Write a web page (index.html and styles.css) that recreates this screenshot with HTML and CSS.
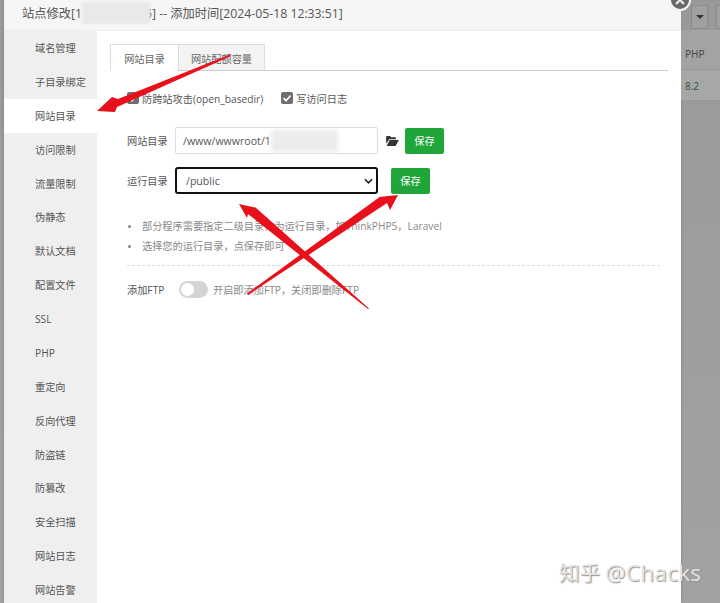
FILE: index.html
```html
<!DOCTYPE html>
<html lang="zh-CN">
<head>
<meta charset="utf-8">
<title>站点修改</title>
<link rel="stylesheet" href="styles.css">
</head>
<body>
<div class="page">
  <div class="modal">
    <header class="head">
      <span class="head-text">站点修改[1<span class="mask-head"></span>5] -- 添加时间[2024-05-18 12:33:51]</span>
    </header>
    <div class="content">
      <nav class="side">
        <a class="item">域名管理</a>
        <a class="item">子目录绑定</a>
        <a class="item active">网站目录</a>
        <a class="item">访问限制</a>
        <a class="item">流量限制</a>
        <a class="item">伪静态</a>
        <a class="item">默认文档</a>
        <a class="item">配置文件</a>
        <a class="item">SSL</a>
        <a class="item">PHP</a>
        <a class="item">重定向</a>
        <a class="item">反向代理</a>
        <a class="item">防盗链</a>
        <a class="item">防篡改</a>
        <a class="item">安全扫描</a>
        <a class="item">网站日志</a>
        <a class="item">网站告警</a>
      </nav>
      <main class="main">
        <div class="tabs">
          <div class="tab current">网站目录</div>
          <div class="tab">网站配额容量</div>
        </div>
        <div class="form">
          <div class="checks">
            <label class="check"><span class="box"><svg viewBox="0 0 12 12" width="12" height="12"><path d="M2.5 6.2 5 8.7 9.6 3.5" fill="none" stroke="#fff" stroke-width="1.7"/></svg></span>防跨站攻击(open_basedir)</label>
            <label class="check"><span class="box"><svg viewBox="0 0 12 12" width="12" height="12"><path d="M2.5 6.2 5 8.7 9.6 3.5" fill="none" stroke="#fff" stroke-width="1.7"/></svg></span>写访问日志</label>
          </div>
          <div class="row row-dir">
            <span class="label">网站目录</span>
            <div class="input">/www/wwwroot/1<span class="mask-input"></span></div>
            <svg class="folder" viewBox="0 0 14 11" width="13" height="10"><path d="M0 1.2C0 .5.5 0 1.2 0h3l1.2 1.3h4.4c.6 0 1 .4 1 1v1.2H3.4L0 8.4z" fill="#333"/><path d="M3.8 4.3H14L10.6 10.6c-.2.3-.4.4-.8.4H.6z" fill="#333"/></svg>
            <button class="save">保存</button>
          </div>
          <div class="row row-run">
            <span class="label">运行目录</span>
            <div class="select">/public<svg class="chev" viewBox="0 0 10 6" width="9" height="6"><path d="M1 1l4 4 4-4" fill="none" stroke="#222" stroke-width="1.8"/></svg></div>
            <button class="save save-run">保存</button>
          </div>
          <ul class="notes">
            <li>部分程序需要指定二级目录作为运行目录，如ThinkPHP5，Laravel</li>
            <li>选择您的运行目录，点保存即可</li>
          </ul>
          <div class="ftp">
            <span class="ftp-label">添加FTP</span>
            <span class="toggle"><span class="knob"></span></span>
            <span class="ftp-text">开启即添加FTP，关闭即删除FTP</span>
          </div>
        </div>
      </main>
    </div>
  </div>
  <aside class="behind">
    <div class="toolbar"><span class="drop"><span class="caret"></span></span><span class="drop drop-next"></span></div>
    <div class="cell cell-head">PHP</div>
    <div class="cell cell-val">8.2</div>
  </aside>
  <span class="close"><svg viewBox="0 0 18 18" width="18" height="18"><path d="M5 5l8 8M13 5l-8 8" stroke="#e6e6e6" stroke-width="2.4"/></svg></span>
  <svg class="arrows" viewBox="0 0 720 603" width="720" height="603">
    <path d="M230 54.500 118 99 112 97 97 111 115 112 117 107 231 56Z" fill="#e8101a"/>
    <path d="M247 293.500 381 196 379 197 398 195 390 210 387 203 248 295Z" fill="#e8101a"/>
    <path d="M369 308.500 255 207 257 208 239 204 247 218 248 214 368 309Z" fill="#e8101a"/>
  </svg>
  <div class="mark">知乎 <span class="mark-name">@Chacks</span></div>
</div>
</body>
</html>
```
FILE: styles.css
```css
* { box-sizing: border-box; }
html, body { margin: 0; padding: 0; }
body {
  font-family: "Open Sans", "Noto Sans CJK SC", sans-serif;
  color: #555;
}
.page {
  position: relative;
  display: flex;
  width: 720px;
  height: 603px;
  padding-left: 4px;
  overflow: hidden;
  background: linear-gradient(#9a9a9a, #a2a2a2);
}
.modal {
  display: flex;
  flex-direction: column;
  width: 677px;
  flex: none;
  background: #fff;
  box-shadow: 0 0 3px rgba(0, 0, 0, .2);
}
.head {
  height: 31px;
  flex: none;
  padding: 2px 0 0 18px;
  background: #f6f6f6;
  border-bottom: 1px solid #eee;
  font-size: 12.25px;
  line-height: 20px;
  white-space: nowrap;
  color: #555;
}
.mask-head {
  display: inline-block;
  width: 68px;
  height: 22px;
  margin-right: -5px;
  vertical-align: -6px;
  background: #e9e9e9;
  filter: blur(1px);
}
.content { display: flex; flex: 1; min-height: 0; }
.side {
  display: flex;
  flex-direction: column;
  width: 93px;
  flex: none;
  background: #efefef;
}
.item {
  display: block;
  flex: none;
  height: 33.88px;
  padding-left: 31px;
  font-size: 10.2px;
  line-height: 34px;
  color: #555;
}
.item.active { background: #fff; }
.main { flex: 1; padding: 13px 13px 0 13px; }
.tabs {
  display: flex;
  height: 27px;
  border-bottom: 1px solid #ccc;
}
.tab {
  width: 87px;
  height: 26px;
  border: 1px solid #ddd;
  border-bottom: 0;
  background: #f3f3f3;
  font-size: 10.2px;
  line-height: 28px;
  text-align: center;
  color: #666;
}
.tab.current {
  width: 68px;
  height: 27px;
  background: #fff;
  border-right: 0;
}
.form { padding: 0 0 0 17px; }
.checks {
  display: flex;
  gap: 18px;
  height: 18px;
  margin-top: 18px;
  align-items: center;
}
.check {
  display: flex;
  align-items: center;
  font-size: 10.2px;
  color: #555;
}
.box {
  display: flex;
  width: 12px;
  height: 12px;
  margin: 0 3px 0 0;
  border-radius: 2px;
  background: #6e6e6e;
}
.row { display: flex; align-items: center; height: 27px; }
.row-dir { margin-top: 20px; }
.row-run { margin-top: 13px; }
.label {
  width: 48px;
  flex: none;
  font-size: 10.2px;
  color: #555;
}
.input, .select {
  display: flex;
  align-items: center;
  position: relative;
  width: 203px;
  height: 27px;
  flex: none;
  font-size: 10.6px;
  color: #555;
}
.input {
  padding-left: 7px;
  border: 1px solid #ddd;
  border-radius: 2px;
}
.mask-input {
  display: inline-block;
  width: 67px;
  height: 22px;
  background: #ececec;
  filter: blur(2px);
}
.select {
  padding-left: 9px;
  border: 2px solid #111;
  border-radius: 3px;
}
.chev { position: absolute; right: 3px; top: 9px; }
.folder { margin: 0 6px 0 8px; flex: none; }
.save {
  width: 39px;
  height: 26px;
  flex: none;
  padding: 0;
  border: 0;
  border-radius: 2px;
  background: #20a53a;
  color: #fff;
  font: 10.2px "Open Sans", "Noto Sans CJK SC", sans-serif;
}
.save-run { margin-left: 13px; }
.notes {
  margin: 22px 0 0;
  padding: 0 0 9px;
  border-bottom: 1px dashed #ddd;
  width: 533px;
  list-style: none;
  font-size: 10.2px;
  color: #888;
}
.notes li {
  position: relative;
  height: 20px;
  padding-left: 15px;
  line-height: 20px;
}
.notes li::before {
  content: "";
  position: absolute;
  left: 1px;
  top: 9px;
  width: 3px;
  height: 3px;
  border-radius: 50%;
  background: #888;
}
.ftp {
  display: flex;
  align-items: center;
  height: 19px;
  margin-top: 14px;
}
.ftp-label { width: 52px; font-size: 10.2px; color: #555; flex: none; }
.toggle {
  display: block;
  width: 29px;
  height: 17px;
  flex: none;
  padding: 1px;
  border-radius: 9px;
  background: #d4d4d4;
}
.knob {
  display: block;
  width: 13px;
  height: 13px;
  margin: 1px 0 0 1px;
  border-radius: 50%;
  background: #fff;
}
.ftp-text { margin-left: 5px; font-size: 10.2px; color: #888; white-space: nowrap; }
.behind {
  flex: 1;
  min-width: 0;
  font-size: 10px;
  color: #444;
}
.toolbar { display: flex; gap: 8px; height: 38px; padding: 5px 0 0 10px; background: linear-gradient(#999 30px, #a3a3a3 30px); }
.drop {
  display: flex;
  justify-content: center;
  align-items: center;
  width: 17px;
  height: 24px;
  flex: none;
  border: 1px solid #8c8c8c;
  background: #a0a0a0;
}
.caret {
  width: 0;
  height: 0;
  border: 4px solid transparent;
  border-top: 4px solid #333;
  border-bottom: 0;
}
.cell {
  height: 32px;
  padding-left: 4px;
  line-height: 32px;
  border-bottom: 1px solid #989898;
}
.cell-head { background: #a3a3a3; }
.cell-val { height: 31px; color: #2c5a33; background: #a7a7a7; }
.close {
  position: absolute;
  left: 669px;
  top: -11px;
  display: block;
  width: 22px;
  height: 22px;
  border: 2px solid #f4f4f4;
  border-radius: 50%;
  background: #666;
}
.close svg { display: block; }
.arrows { position: absolute; left: 0; top: 0; pointer-events: none; }
.mark {
  position: absolute;
  left: 559px;
  top: 558px;
  font-size: 20.5px;
  line-height: 30px;
  white-space: nowrap;
  color: #e4e4e4;
  text-shadow: 1px 1px 1px #8f8f8f;
}
.mark-name { font-size: 22.5px; letter-spacing: .3px; }
```
